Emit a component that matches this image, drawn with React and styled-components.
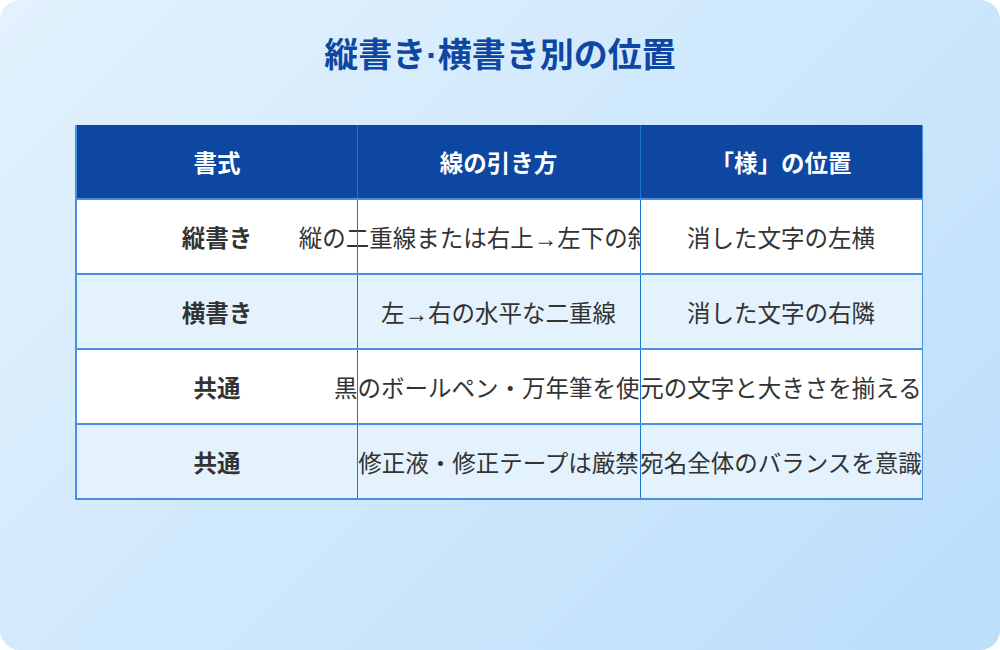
import React from 'react'
import styled, { createGlobalStyle } from 'styled-components'

const GlobalStyle = createGlobalStyle`
  html, body {
    margin: 0;
    padding: 0;
    background: #fff;
  }
  body {
    font-family: "Liberation Sans", "Noto Sans CJK JP", sans-serif;
  }
`

const Card = styled.div`
  width: 1000px;
  height: 650px;
  box-sizing: border-box;
  border-radius: 20px;
  background: linear-gradient(135deg, #e3f2fd 0%, #bbdefb 100%);
  padding: 36px 0 0 75px;
  overflow: hidden;
`

const Title = styled.h1`
  margin: 0 0 51px -75px;
  font-size: 34px;
  line-height: 38px;
  font-weight: 700;
  color: #0d47a1;
  text-align: center;
`

const Table = styled.div`
  width: 848px;
  display: grid;
  grid-template-columns: 280px 283px 282px;
  border-left: 2px solid #4a90e2;
  border-right: 1px solid #4a90e2;
  box-sizing: border-box;
`

const Cell = styled.div`
  position: relative;
  height: 75px;
  box-sizing: border-box;
  display: flex;
  align-items: center;
  justify-content: center;
  white-space: nowrap;
  font-size: 23.5px;
  border-bottom: 2px solid #4a90e2;
  background: ${p => (p.$head ? '#0d47a1' : p.$shade ? '#e3f2fd' : '#ffffff')};
  color: ${p => (p.$head ? '#ffffff' : '#333333')};
  font-weight: ${p => (p.$head || p.$strong ? 700 : 400)};

  &:not(:nth-child(3n + 1))::before {
    content: '';
    position: absolute;
    left: 0;
    top: 0;
    bottom: 0;
    width: 1px;
    background: #1976d2;
  }
`

const headers = ['書式', '線の引き方', '「様」の位置']

const rows = [
  ['縦書き', '縦の二重線または右上→左下の斜め線', '消した文字の左横'],
  ['横書き', '左→右の水平な二重線', '消した文字の右隣'],
  ['共通', '黒のボールペン・万年筆を使用', '元の文字と大きさを揃える'],
  ['共通', '修正液・修正テープは厳禁', '宛名全体のバランスを意識'],
]

const App = () => (
  <>
    <GlobalStyle />
    <Card>
      <Title>縦書き·横書き別の位置</Title>
      <Table>
        {headers.map(h => (
          <Cell key={h} $head>{h}</Cell>
        ))}
        {rows.map((row, i) =>
          row.map((text, j) => (
            <Cell key={`${i}-${j}`} $shade={i % 2 === 1} $strong={j === 0}>
              {text}
            </Cell>
          ))
        )}
      </Table>
    </Card>
  </>
)

export default App
